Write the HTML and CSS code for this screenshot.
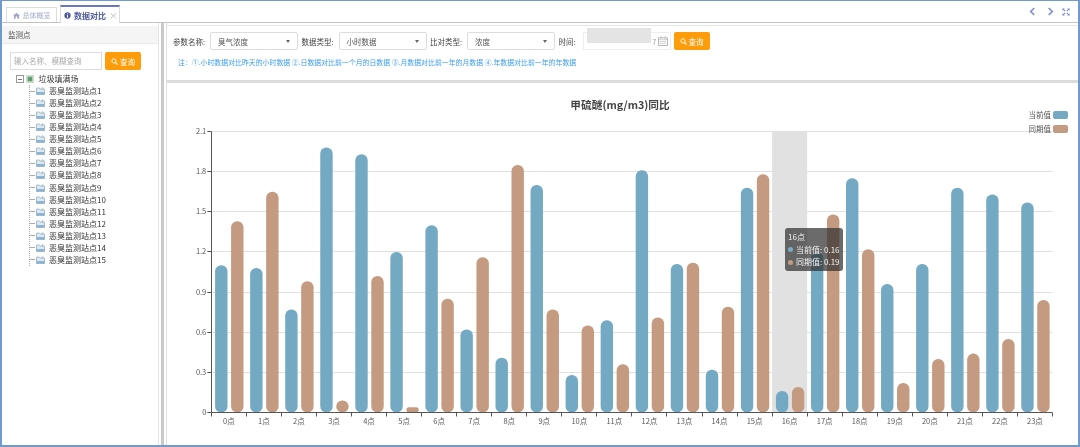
FILE: index.html
```html
<!DOCTYPE html>
<html lang="zh">
<head>
<meta charset="utf-8">
<title>数据对比</title>
<link rel="stylesheet" href="styles.css">
</head>
<body>
<svg class="defs" width="0" height="0">
  <symbol id="i-search" viewBox="0 0 10 10"><circle cx="4.2" cy="4.2" r="3" fill="none" stroke="currentColor" stroke-width="1.3"/><path d="M6.5 6.5 9 9" stroke="currentColor" stroke-width="1.5" stroke-linecap="round"/></symbol>
  <symbol id="i-node" viewBox="0 0 9 8"><path d="M.5 1h3l1 1.2h4v5.3H.5z" fill="#dfe9f2" stroke="#86a6c2" stroke-width=".7"/><path d="M.5 5h8v2.5h-8z" fill="#8fb4d2"/><path d="M4.5 1.2l2.5-1 1 2z" fill="#a9c2a8"/></symbol>
</svg>
<div class="app">
  <header class="tabbar">
    <div class="tabs">
      <div class="tab">
        <svg class="tab-icon" viewBox="0 0 10 9"><path d="M5 .5 0 4.6h1.3V9h2.6V6h2.2v3h2.6V4.6H10z" fill="currentColor"/></svg>
        <span>总体概览</span>
      </div>
      <div class="tab active">
        <svg class="tab-icon" viewBox="0 0 10 10"><circle cx="5" cy="5" r="4.5" fill="currentColor"/><path d="M5 2v1.2M5 4.4V8" stroke="#fff" stroke-width="1.4"/></svg>
        <span>数据对比</span>
        <span class="tab-close">×</span>
      </div>
    </div>
    <div class="tab-tools">
      <svg viewBox="0 0 8 10"><path d="M6 1 2 5l4 4" fill="none" stroke="currentColor" stroke-width="2"/></svg>
      <svg viewBox="0 0 8 10"><path d="M2 1l4 4-4 4" fill="none" stroke="currentColor" stroke-width="2"/></svg>
      <svg viewBox="0 0 10 10"><path d="M1 1l3 3M9 1 6 4M1 9l3-3M9 9 6 6" stroke="currentColor" stroke-width="1.5"/><path d="M.5.5h3L.5 3.5zM9.5.5h-3l3 3zM.5 9.5h3l-3-3zM9.5 9.5h-3l3-3z" fill="currentColor"/></svg>
    </div>
  </header>
  <main class="main">
    <aside class="side">
      <div class="side-head">监测点</div>
      <div class="side-search">
        <div class="search-input">输入名称、模糊查询</div>
        <button class="btn"><svg class="btn-icon"><use href="#i-search"/></svg>查询</button>
      </div>
      <div class="tree">
        <div class="tree-root">
          <span class="tree-toggle"></span>
          <svg class="root-icon" viewBox="0 0 9 9"><rect width="9" height="9" fill="#cfdccf"/><rect x="2" y="2" width="5" height="5" fill="#5f9e6e"/></svg>
          <span>垃圾填满场</span>
        </div>
        <ul class="tree-list">
          <li><svg class="node-icon"><use href="#i-node"/></svg>恶臭监测站点1</li>
          <li><svg class="node-icon"><use href="#i-node"/></svg>恶臭监测站点2</li>
          <li><svg class="node-icon"><use href="#i-node"/></svg>恶臭监测站点3</li>
          <li><svg class="node-icon"><use href="#i-node"/></svg>恶臭监测站点4</li>
          <li><svg class="node-icon"><use href="#i-node"/></svg>恶臭监测站点5</li>
          <li><svg class="node-icon"><use href="#i-node"/></svg>恶臭监测站点6</li>
          <li><svg class="node-icon"><use href="#i-node"/></svg>恶臭监测站点7</li>
          <li><svg class="node-icon"><use href="#i-node"/></svg>恶臭监测站点8</li>
          <li><svg class="node-icon"><use href="#i-node"/></svg>恶臭监测站点9</li>
          <li><svg class="node-icon"><use href="#i-node"/></svg>恶臭监测站点10</li>
          <li><svg class="node-icon"><use href="#i-node"/></svg>恶臭监测站点11</li>
          <li><svg class="node-icon"><use href="#i-node"/></svg>恶臭监测站点12</li>
          <li><svg class="node-icon"><use href="#i-node"/></svg>恶臭监测站点13</li>
          <li><svg class="node-icon"><use href="#i-node"/></svg>恶臭监测站点14</li>
          <li><svg class="node-icon"><use href="#i-node"/></svg>恶臭监测站点15</li>
        </ul>
      </div>
    </aside>
    <div class="splitter"></div>
    <section class="content">
      <div class="filters">
        <div class="filter-row">
          <label class="f-label">参数名称:</label>
          <div class="select"><span>臭气浓度</span><i class="caret"></i></div>
          <label class="f-label">数据类型:</label>
          <div class="select"><span>小时数据</span><i class="caret"></i></div>
          <label class="f-label">比对类型:</label>
          <div class="select"><span>浓度</span><i class="caret"></i></div>
          <label class="f-label">时间:</label>
          <div class="date">
            <span class="date-mask"></span>
            <span class="date-end">7</span>
            <svg class="cal" viewBox="0 0 11 11"><path d="M.5 2h10v8.5H.5z" fill="none" stroke="#999" stroke-width=".8"/><path d="M.5 4h10M3 .5v2.5M8 .5v2.5M2 6h7M2 8h7" stroke="#aaa" stroke-width=".8" stroke-dasharray="1.4 .6"/></svg>
          </div>
          <button class="btn"><svg class="btn-icon"><use href="#i-search"/></svg>查询</button>
        </div>
        <p class="note">注：①.小时数据对比昨天的小时数据 ②.日数据对比前一个月的日数据 ③.月数据对比前一年的月数据 ④.年数据对比前一年的年数据</p>
      </div>
      <div class="chart">
        <svg id="chart" class="chart-svg" viewBox="167 83 911 362" xmlns="http://www.w3.org/2000/svg"></svg>
        <div class="tooltip">
          <div>16点</div>
          <div class="tip-row"><i class="dot dot-a"></i>当前值: 0.16</div>
          <div class="tip-row"><i class="dot dot-b"></i>同期值: 0.19</div>
        </div>
      </div>
    </section>
  </main>
</div>
<script src="chart.js"></script>
</body>
</html>
```
FILE: styles.css
```css
* { box-sizing: border-box; }
html, body { margin: 0; padding: 0; background: #fff; }
body { font-family: "Noto Sans CJK SC", "Liberation Sans", sans-serif; color: #444; overflow: hidden; }
.defs { position: absolute; }
.app {
  width: 1080px; height: 447px; display: flex; flex-direction: column;
  border: 2px solid #6f9bd1; border-top-width: 1px;
  filter: blur(.3px);
}
.tabbar { height: 22px; flex: none; display: flex; justify-content: space-between; align-items: flex-end; border-bottom: 1px solid #c4c4c4; padding-left: 4px; }
.tabs { display: flex; gap: 3px; align-items: flex-end; height: 100%; }
.tab { height: 15px; width: 51px; display: flex; align-items: center; justify-content: center; gap: 3px; font-size: 7px; color: #a3aacb; border: 1px solid #dcdcdc; border-bottom: 0; }
.tab.active { height: 18px; width: 60px; padding-left: 2px; color: #4f5c9e; font-weight: 700; font-size: 8px; border-top: 2px solid #6a77b8; background: #fff; margin-bottom: -1px; position: relative; }
.tab-icon { width: 7px; height: 7px; }
.tab-close { color: #bbb; font-weight: 400; font-size: 9px; }
.tab-tools { display: flex; align-self: center; gap: 11px; color: #8390cf; padding-right: 8px; }
.tab-tools svg { width: 7px; height: 9px; }
.tab-tools svg:last-child { width: 8px; height: 8px; margin-left: -2.5px; margin-top: 1px; }
.main { flex: 1; display: flex; min-height: 0; }
.side { width: 157px; flex: none; border-right: 1px solid #e3e3e3; padding-top: 3px; }
.side-head { height: 18px; line-height: 18px; background: #f5f5f5; border-bottom: 1px solid #eaeaea; font-size: 7.5px; padding-left: 6px; color: #555; }
.side-search { display: flex; gap: 3px; padding: 8px 0 0 8px; }
.search-input { width: 92px; height: 18px; line-height: 16px; border: 1px solid #dcdcdc; font-size: 7.5px; color: #aaa; padding-left: 3px; }
.btn { height: 18px; width: 36px; flex: none; padding: 0; border: 0; border-radius: 2px; background: #ff9c0a; color: #fff; font: inherit; font-size: 7.5px; display: flex; align-items: center; justify-content: center; gap: 2px; }
.btn-icon { width: 7px; height: 7px; }
.tree { padding: 3px 0 0 14px; font-size: 8px; color: #333; line-height: 12px; }
.tree-root { display: flex; align-items: center; height: 12px; }
.tree-toggle { width: 8px; height: 8px; border: 1px solid #999; margin-right: 2px; position: relative; }
.tree-toggle::after { content: ""; position: absolute; left: 1px; right: 1px; top: 2.5px; height: 1px; background: #777; }
.root-icon { width: 8px; height: 8px; margin-right: 4.5px; }
.tree-list { list-style: none; margin: 0 0 0 13px; padding: 0; border-left: 1px dotted #aaa; }
.tree-list li { height: 12.07px; display: flex; align-items: center; background: linear-gradient(#aaa, #aaa) 0 50% / 5px 1px no-repeat; }
.node-icon { width: 9px; height: 8px; margin: 0 4px 0 6px; flex: none; }
.splitter { width: 8px; flex: none; border-right: 1px solid #dedede; background: linear-gradient(#c9c9c9, #c9c9c9) 2px 0 / 3px 100% no-repeat; }
.content { flex: 1; min-width: 0; display: flex; flex-direction: column; }
.filters { height: 58px; flex: none; border-top: 1px solid #e6e6e6; margin-top: 2px; border-bottom: 3px solid #dcdcdc; padding: 6px 0 0 6px; }
.filter-row { display: flex; align-items: center; height: 18px; }
.f-label { font-size: 7.5px; color: #444; width: 37px; flex: none; }
.select { width: 88px; height: 18px; margin-right: 3.5px; border: 1px solid #dcdcdc; border-radius: 2px; display: flex; align-items: center; justify-content: space-between; padding: 0 7px; font-size: 7.5px; color: #555; flex: none; }
.caret { width: 0; height: 0; border: 2.5px solid transparent; border-top: 3px solid #666; border-bottom: 0; }
.date { width: 88px; height: 18px; margin: 0 3px 0 -13px; border: 1px solid #eee; position: relative; display: flex; align-items: center; justify-content: flex-end; padding-right: 2px; font-size: 7.5px; color: #aaa; gap: 1px; flex: none; }
.date-mask { position: absolute; left: 3px; top: -5px; width: 64px; height: 15px; background: #e4e4e4; }
.cal { width: 10px; height: 10px; }
.note { margin: 5px 0 0 5px; font-size: 6.9px; color: #3c9df2; white-space: nowrap; line-height: 14px; }
.chart { flex: 1; min-height: 0; position: relative; overflow: hidden; }
.chart-svg { display: block; width: 911px; height: 362px; font-family: "Noto Sans CJK SC", "Liberation Sans", sans-serif; }
.tooltip { position: absolute; left: 618px; top: 145px; width: 58px; height: 43px; border-radius: 3px; background: rgba(50,50,50,.72); color: #f2f2f2; font-size: 8px; line-height: 12.5px; padding: 3px 0 0 3px; white-space: nowrap; }
.tip-row { display: flex; align-items: center; }
.dot { width: 5px; height: 5px; border-radius: 50%; margin-right: 3px; }
.dot-a { background: #73acc6; }
.dot-b { background: #c49b80; }
.c-grid { stroke: #e0e0e0; stroke-width: 1; }
.c-axis { stroke: #555; stroke-width: 1; fill: none; }
.c-hl { fill: #e1e1e1; }
.c-a { fill: #73a9c3; }
.c-b { fill: #c49a80; }
.c-lab { font-size: 7.5px; fill: #555; }
.c-title { font-size: 10.7px; font-weight: 700; fill: #444; }
```
FILE: chart.js
```js
var A = [1.10,1.08,.77,1.98,1.93,1.20,1.40,.62,.41,1.70,.28,.69,1.81,1.11,.32,1.68,.16,1.20,1.75,.96,1.11,1.68,1.63,1.57];
var B = [1.43,1.65,.98,.09,1.02,.04,.85,1.16,1.85,.77,.65,.36,.71,1.12,.79,1.78,.19,1.48,1.22,.22,.40,.44,.55,.84];
var X0 = 211.3, X1 = 1052.5, Y0 = 412.5, Y1 = 131.5, CW = (X1 - X0) / 24, K = (Y0 - Y1) / 2.1;
var NS = "http://www.w3.org/2000/svg", svg = document.getElementById("chart");
function el(tag, attrs, text) {
  var n = document.createElementNS(NS, tag);
  for (var k in attrs) n.setAttribute(k, attrs[k]);
  if (text !== undefined) n.textContent = text;
  svg.appendChild(n);
  return n;
}
function bar(x, v, cls) {
  var h = Math.max(v * K, 3);
  el("rect", { x: x, y: Y0 - h, width: 12.4, height: h, rx: Math.min(6, h / 2), class: cls });
}
el("rect", { x: X0 + 16 * CW, y: Y1, width: CW, height: Y0 - Y1, class: "c-hl" });
for (var t = 1; t <= 7; t++) {
  var y = Math.floor(Y0 - t * 0.3 * K + .01) + .5;
  el("line", { x1: X0, x2: X1, y1: y, y2: y, class: "c-grid" });
}
for (var g = 0; g <= 7; g++) {
  var gy = Math.floor(Y0 - g * 0.3 * K + .01) + .5;
  el("line", { x1: X0 - 4, x2: X0, y1: gy, y2: gy, class: "c-axis" });
  el("text", { x: X0 - 5, y: gy + 2.7, "text-anchor": "end", class: "c-lab" }, g === 0 ? "0" : (g * 0.3).toFixed(1));
}
for (var i = 0; i < 24; i++) {
  var x = X0 + i * CW;
  bar(x + 3.8, A[i], "c-a");
  bar(x + 19.8, B[i], "c-b");
  el("text", { x: x + CW / 2, y: 423.5, "text-anchor": "middle", class: "c-lab" }, i + "点");
}
el("path", { d: "M" + Math.floor(X0) + ".5 " + Y1 + "V" + Y0 + "H" + X1, class: "c-axis" });
for (var j = 0; j <= 24; j++) {
  var tx = Math.floor(X0 + j * CW) + .5;
  el("line", { x1: tx, x2: tx, y1: Y0, y2: Y0 + 4, class: "c-axis" });
}
el("text", { x: 620, y: 109, "text-anchor": "middle", class: "c-title" }, "甲硫醚(mg/m3)同比");
el("text", { x: 1051, y: 118, "text-anchor": "end", class: "c-lab" }, "当前值");
el("rect", { x: 1053, y: 111, width: 15, height: 8, rx: 2, class: "c-a" });
el("text", { x: 1051, y: 132, "text-anchor": "end", class: "c-lab" }, "同期值");
el("rect", { x: 1053, y: 125, width: 15, height: 8, rx: 2, class: "c-b" });
```
